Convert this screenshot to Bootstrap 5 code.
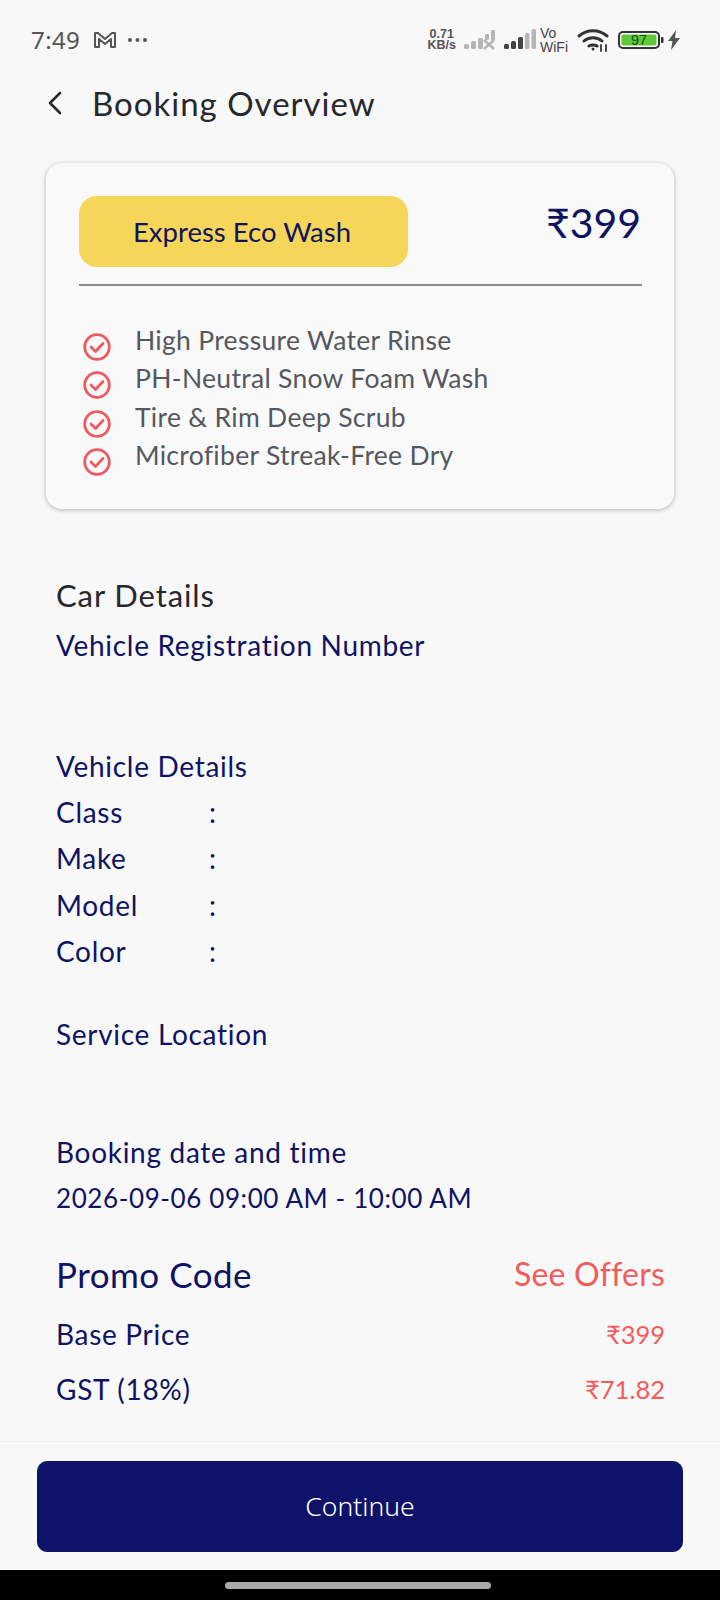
<!DOCTYPE html>
<html lang="en">
<head>
<meta charset="utf-8">
<title>Booking Overview</title>
<link href="https://cdn.jsdelivr.net/npm/bootstrap@5.3.0/dist/css/bootstrap.min.css" rel="stylesheet">
<style>
html,body{margin:0;height:1600px;overflow:hidden}
body{background:#f8f8f8;font-family:"Lato","Noto Sans",sans-serif;color:#0f1363;width:720px}
.screen{height:1570px}
.status-row{height:80px;padding:0 40px 0 31px;color:#4a4a4a}
.clock{font-family:"Noto Sans",sans-serif;font-size:24px;line-height:1;letter-spacing:.4px;color:#555}
.glyph-m{margin-left:13px}
.net{font-family:"Liberation Sans",sans-serif;font-size:12.5px;font-weight:700;line-height:11px;color:#555}
.vowifi{font-family:"Liberation Sans",sans-serif;font-size:14px;line-height:14px;color:#444}
.wifi-glyph{margin-left:9px}
.batt-glyph{margin-left:9px}
.title-row{height:46px;padding-left:46px}
.title-text{font-size:33px;line-height:46px;color:#26282c;margin-left:28px;font-weight:400;letter-spacing:1px}
.plan-card{margin:37px 46px 0;height:346px;border-radius:16px;background:#f9f9f9;box-shadow:0 1px 5px rgba(0,0,0,.28);padding:33px 32px 0 33px}
.plan-pill{width:329px;height:71px;border-radius:18px;background:#f6d658;color:#101460;font-size:27.5px;padding-right:3px}
.plan-price{font-size:41px;line-height:56px;color:#101460;margin:-1px 1px 0 0}
.plan-rule{height:2px;background:#8a8a8a;margin:17px 0 0;width:563px}
.feature-list{margin:36px 0 0;padding:0;list-style:none}
.feature-list li{height:38.4px;display:flex;color:#55585e;font-size:26.5px;line-height:36px;letter-spacing:.3px}
.feature-list svg{margin:11px 24px 0 4px;flex:none}
.sect{padding:0 55px 0 56px}
.h-car{font-size:31px;line-height:40px;color:#26282c;margin-top:66px;letter-spacing:.9px}
.line{font-size:28px;line-height:40px;letter-spacing:.7px}
.kv{display:flex;height:46.3px;align-items:center;font-size:28px;letter-spacing:.7px;margin-top:3px}
.kv + .kv{margin-top:0}
.kv span:first-child{width:153px}
.reg-line{margin-top:10px}
.details-line{margin-top:81px}
.service-line{margin-top:40px}
.booking-line{margin-top:78px}
.date-line{font-size:26px;line-height:40px;letter-spacing:.6px;margin-top:6px}
.promo-row{margin-top:33px}
.base-row{margin-top:17px}
.gst-row{margin-top:15px}
.promo{font-size:35px;line-height:46px;letter-spacing:.5px}
.offer{font-size:32px;line-height:46px;color:#f45b5b;letter-spacing:.2px}
.amt{color:#f45b5b;font-size:25.5px;line-height:40px}
.footer-bar{position:fixed;left:0;right:0;top:1441px;height:129px;border-top:1px solid #eeeeee;background:#f8f8f8;padding:19px 37px 0}
.go-btn{width:646px;height:91px;background:#0e1268;border-color:#0e1268;border-radius:10px;color:#fff;font-size:26.5px;font-family:"Noto Sans",sans-serif;font-weight:300}
.nav-strip{position:fixed;left:0;right:0;top:1570px;height:30px;background:#000}
.home-pill{width:266px;height:7px;background:#aaa;border-radius:4px;margin:12px 4px 0 0}
</style>
</head>
<body>
<div class="screen">
  <div class="status-row d-flex align-items-center justify-content-between">
    <div class="d-flex align-items-center">
      <span class="clock">7:49</span>
      <svg class="glyph-m" width="24" height="18" viewBox="0 0 24 18" fill="none" stroke="#555" stroke-width="2" stroke-linejoin="round"><path d="M2 2h3l7 6 7-6h3v14h-4V8l-6 5-6-5v8H2z"/></svg>
      <svg class="ms-2" width="24" height="6" viewBox="0 0 24 6" fill="#555"><circle cx="5" cy="3" r="2"/><circle cx="12.500" cy="3" r="2"/><circle cx="20" cy="3" r="2"/></svg>
    </div>
    <div class="d-flex align-items-center">
      <div class="net text-center">0.71<br>KB/s</div>
      <svg class="ms-2" width="32" height="22" viewBox="0 0 32 22" fill="#b5b5b5"><rect x="0" y="15" width="5" height="5" rx="1.500"/><rect x="7" y="12" width="5" height="8" rx="1.500"/><rect x="14" y="9" width="5" height="11" rx="1.500"/><rect x="21" y="5" width="4" height="6" rx="1"/><rect x="27" y="1" width="4" height="10" rx="1"/><path d="M20 11l10 9M30 11l-10 9" stroke="#b5b5b5" stroke-width="2.500" fill="none"/></svg>
      <svg class="ms-2" width="32" height="22" viewBox="0 0 32 22"><rect x="0" y="15" width="5" height="5" rx="1.500" fill="#444"/><rect x="7" y="12" width="5" height="8" rx="1.500" fill="#444"/><rect x="14" y="8" width="5" height="12" rx="1.500" fill="#444"/><rect x="21" y="4" width="4.500" height="16" rx="1.500" fill="#b5b5b5"/><rect x="27.500" y="0" width="4.500" height="20" rx="1.500" fill="#b5b5b5"/></svg>
      <div class="vowifi ms-1">Vo<br>WiFi</div>
      <svg class="wifi-glyph" width="32" height="24" viewBox="0 0 32 24" fill="none" stroke="#333" stroke-width="3" stroke-linecap="round"><path d="M2 8c8-7 20-7 28 0M7 13c5-4.500 13-4.500 18 0M12 18c2-1.500 6-1.500 8 0"/><circle cx="16" cy="21" r="1.500" fill="#333" stroke="none"/><path d="M24 17v6M29 17v6" stroke-width="1.800"/></svg>
      <svg class="batt-glyph" width="46" height="20" viewBox="0 0 46 20"><rect x="1" y="2" width="40" height="16" rx="4" fill="none" stroke="#333" stroke-width="2"/><rect x="3.500" y="4.500" width="35" height="11" rx="2" fill="#5dc83a"/><rect x="43" y="7" width="2.500" height="6" rx="1" fill="#333"/><text x="21" y="15.200" text-anchor="middle" font-family="Liberation Sans" font-size="14.500" fill="#1d4a10">97</text></svg>
      <svg class="ms-1" width="12" height="20" viewBox="0 0 12 20" fill="#555"><path d="M8 0L0 11h4.500L3 20l9-12H7z"/></svg>
    </div>
  </div>

  <div class="title-row d-flex align-items-center">
    <svg width="18" height="26" viewBox="0 0 18 26" fill="none" stroke="#26282c" stroke-width="2.600" stroke-linecap="round" stroke-linejoin="round"><path d="M14 3L4 13l10 10"/></svg>
    <h1 class="title-text mb-0">Booking Overview</h1>
  </div>

  <div class="plan-card">
    <div class="d-flex justify-content-between">
      <div class="plan-pill d-flex align-items-center justify-content-center">Express Eco Wash</div>
      <div class="plan-price">₹399</div>
    </div>
    <div class="plan-rule"></div>
    <ul class="feature-list">
      <li><svg width="28" height="28" viewBox="0 0 28 28" fill="none" stroke="#ee5a5f" stroke-width="2.800" stroke-linecap="round" stroke-linejoin="round"><circle cx="14" cy="14" r="12.300"/><path d="M8 14l4.500 4.500L20 10.500"/></svg>High Pressure Water Rinse</li>
      <li><svg width="28" height="28" viewBox="0 0 28 28" fill="none" stroke="#ee5a5f" stroke-width="2.800" stroke-linecap="round" stroke-linejoin="round"><circle cx="14" cy="14" r="12.300"/><path d="M8 14l4.500 4.500L20 10.500"/></svg>PH-Neutral Snow Foam Wash</li>
      <li><svg width="28" height="28" viewBox="0 0 28 28" fill="none" stroke="#ee5a5f" stroke-width="2.800" stroke-linecap="round" stroke-linejoin="round"><circle cx="14" cy="14" r="12.300"/><path d="M8 14l4.500 4.500L20 10.500"/></svg>Tire &amp; Rim Deep Scrub</li>
      <li><svg width="28" height="28" viewBox="0 0 28 28" fill="none" stroke="#ee5a5f" stroke-width="2.800" stroke-linecap="round" stroke-linejoin="round"><circle cx="14" cy="14" r="12.300"/><path d="M8 14l4.500 4.500L20 10.500"/></svg>Microfiber Streak-Free Dry</li>
    </ul>
  </div>

  <div class="sect">
    <div class="h-car">Car Details</div>
    <div class="line reg-line">Vehicle Registration Number</div>
    <div class="line details-line">Vehicle Details</div>
    <div class="kv"><span>Class</span><span>:</span></div>
    <div class="kv"><span>Make</span><span>:</span></div>
    <div class="kv"><span>Model</span><span>:</span></div>
    <div class="kv"><span>Color</span><span>:</span></div>
    <div class="line service-line">Service Location</div>
    <div class="line booking-line">Booking date and time</div>
    <div class="date-line">2026-09-06 09:00 AM - 10:00 AM</div>
    <div class="promo-row d-flex justify-content-between"><span class="promo">Promo Code</span><span class="offer">See Offers</span></div>
    <div class="base-row d-flex justify-content-between"><span class="line">Base Price</span><span class="amt">₹399</span></div>
    <div class="gst-row d-flex justify-content-between"><span class="line">GST (18%)</span><span class="amt">₹71.82</span></div>
  </div>
</div>
<div class="footer-bar"><button type="button" class="btn go-btn">Continue</button></div>
<div class="nav-strip d-flex justify-content-center"><div class="home-pill"></div></div>
</body>
</html>
